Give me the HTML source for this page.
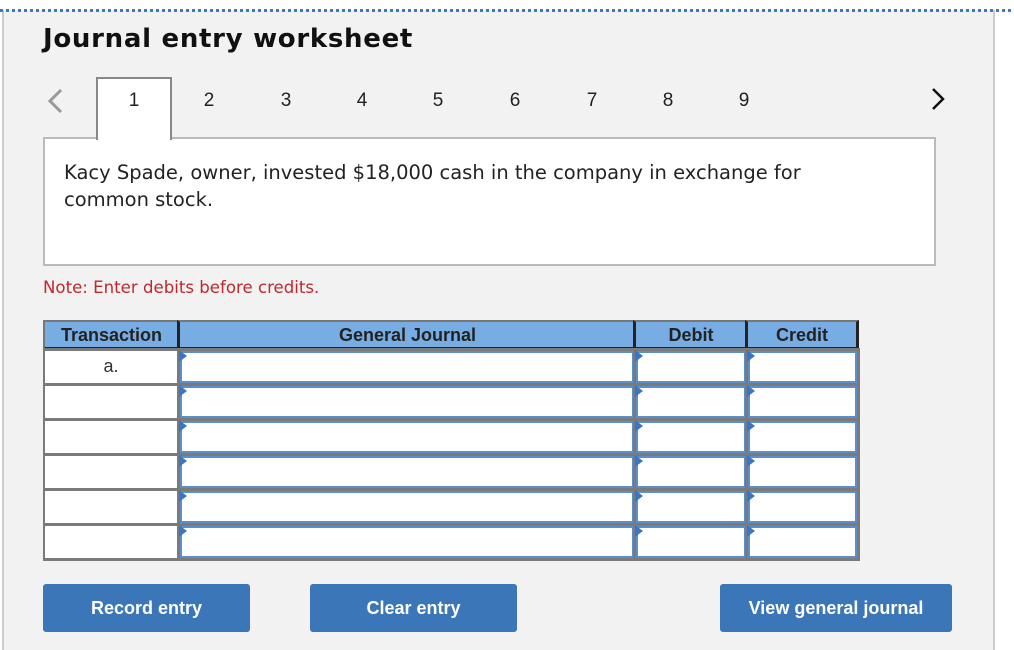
<!DOCTYPE html>
<html><head><style>
*{margin:0;padding:0;box-sizing:border-box}
body{width:1014px;height:633px;background:#fff;position:relative;overflow:hidden;font-family:"DejaVu Sans","Liberation Sans",sans-serif}
.a{position:absolute}
#panel{left:2px;top:10px;width:993px;height:640px;background:#f2f2f2;border-left:2px solid #ccc;border-right:2px solid #ccc}
#dots{left:0;top:9px;width:1014px;height:3px;background:repeating-linear-gradient(90deg,#3e78c0 0 3px,transparent 3px 6px)}
h1{position:absolute;left:43px;top:24px;font-size:26px;letter-spacing:0.7px;font-weight:bold;color:#111}
.tab{top:90px;font-family:"Liberation Sans",sans-serif;font-size:19px;color:#222;width:30px;text-align:center}
#desc{left:43px;top:137px;width:893px;height:129px;background:#fff;border:2px solid #bbb}
#tab1{left:96px;top:77px;width:76px;height:63px;background:#fff;border:2px solid #888;border-bottom:none}
.btn{top:584px;height:48px;background:#3a76b8;color:#fff;border-radius:3px;font-family:"Liberation Sans",sans-serif;font-weight:bold;font-size:18px;text-align:center;line-height:48px}
.h{top:320px;height:30px;background:#78ade3;font-family:"Liberation Sans",sans-serif;font-weight:bold;font-size:18px;color:#222;text-align:center;line-height:26px;border-top:2px solid #777;border-bottom:3px solid #222}
.c{background:#fff;border:3px solid #7a7a7a}
.in{background:#fff;border:2px solid #5b8fcc;position:absolute}
.tri{position:absolute;width:0;height:0;border-top:6px solid transparent;border-bottom:6px solid transparent;border-left:8px solid #3a76c4}
</style></head><body>
<div class="a" id="panel"></div>
<div class="a" id="dots"></div>
<h1>Journal entry worksheet</h1>
<svg class="a" style="left:45px;top:88px" width="22" height="26"><path d="M16 2 L5 13 L16 24" stroke="#999" stroke-width="3" fill="none"/></svg>
<svg class="a" style="left:928px;top:86px" width="22" height="26"><path d="M5 3 L15 13 L5 23" stroke="#111" stroke-width="2.5" fill="none"/></svg>
<div class="a" id="desc"></div>
<div class="a" id="tab1"></div>
<div class="a tab" style="left:119px">1</div>
<div class="a tab" style="left:194px">2</div>
<div class="a tab" style="left:271px">3</div>
<div class="a tab" style="left:347px">4</div>
<div class="a tab" style="left:423px">5</div>
<div class="a tab" style="left:500px">6</div>
<div class="a tab" style="left:577px">7</div>
<div class="a tab" style="left:653px">8</div>
<div class="a tab" style="left:729px">9</div>
<div class="a" style="left:64px;top:159px;font-size:19.5px;line-height:27px;color:#222;width:780px">Kacy Spade, owner, invested $18,000 cash in the company in exchange for common stock.</div>
<div class="a" style="left:43px;top:278px;font-size:16.6px;color:#c0282e">Note: Enter debits before credits.</div>

<div class="a h" style="left:43px;width:135px;border-left:2px solid #777">Transaction</div>
<div class="a h" style="left:177px;width:458px;border-left:3px solid #222">General Journal</div>
<div class="a h" style="left:633px;width:113px;border-left:3px solid #222">Debit</div>
<div class="a h" style="left:745px;width:114px;border-left:3px solid #222;border-right:3px solid #222">Credit</div>

<div id="rows"></div>
<script>
var r='';for(var i=0;i<6;i++){var y=348+i*35;
r+='<div class="a c" style="left:43px;top:'+y+'px;width:137px;height:38px;border-width:3px 3px 3px 2px;border-color:#7a7a7a">'+(i==0?'<div style="text-align:center;font-family:Liberation Sans,sans-serif;font-size:18px;color:#333;line-height:30px">a.</div>':'')+'</div>';
[[177,459],[633,115],[745,114]].forEach(function(c){
r+='<div class="a" style="left:'+c[0]+'px;top:'+y+'px;width:'+(c[1]+1)+'px;height:38px;background:#7a7a7a"></div>';
r+='<div class="in" style="left:'+(c[0]+3)+'px;top:'+(y+3)+'px;width:'+(c[1]-5)+'px;height:32px"></div>';
r+='<div class="tri" style="left:'+(c[0]+2)+'px;top:'+(y+2)+'px"></div>';});}
document.getElementById('rows').innerHTML=r;
</script>
<div class="a btn" style="left:43px;width:207px">Record entry</div>
<div class="a btn" style="left:310px;width:207px">Clear entry</div>
<div class="a btn" style="left:720px;width:232px">View general journal</div>
</body></html>
